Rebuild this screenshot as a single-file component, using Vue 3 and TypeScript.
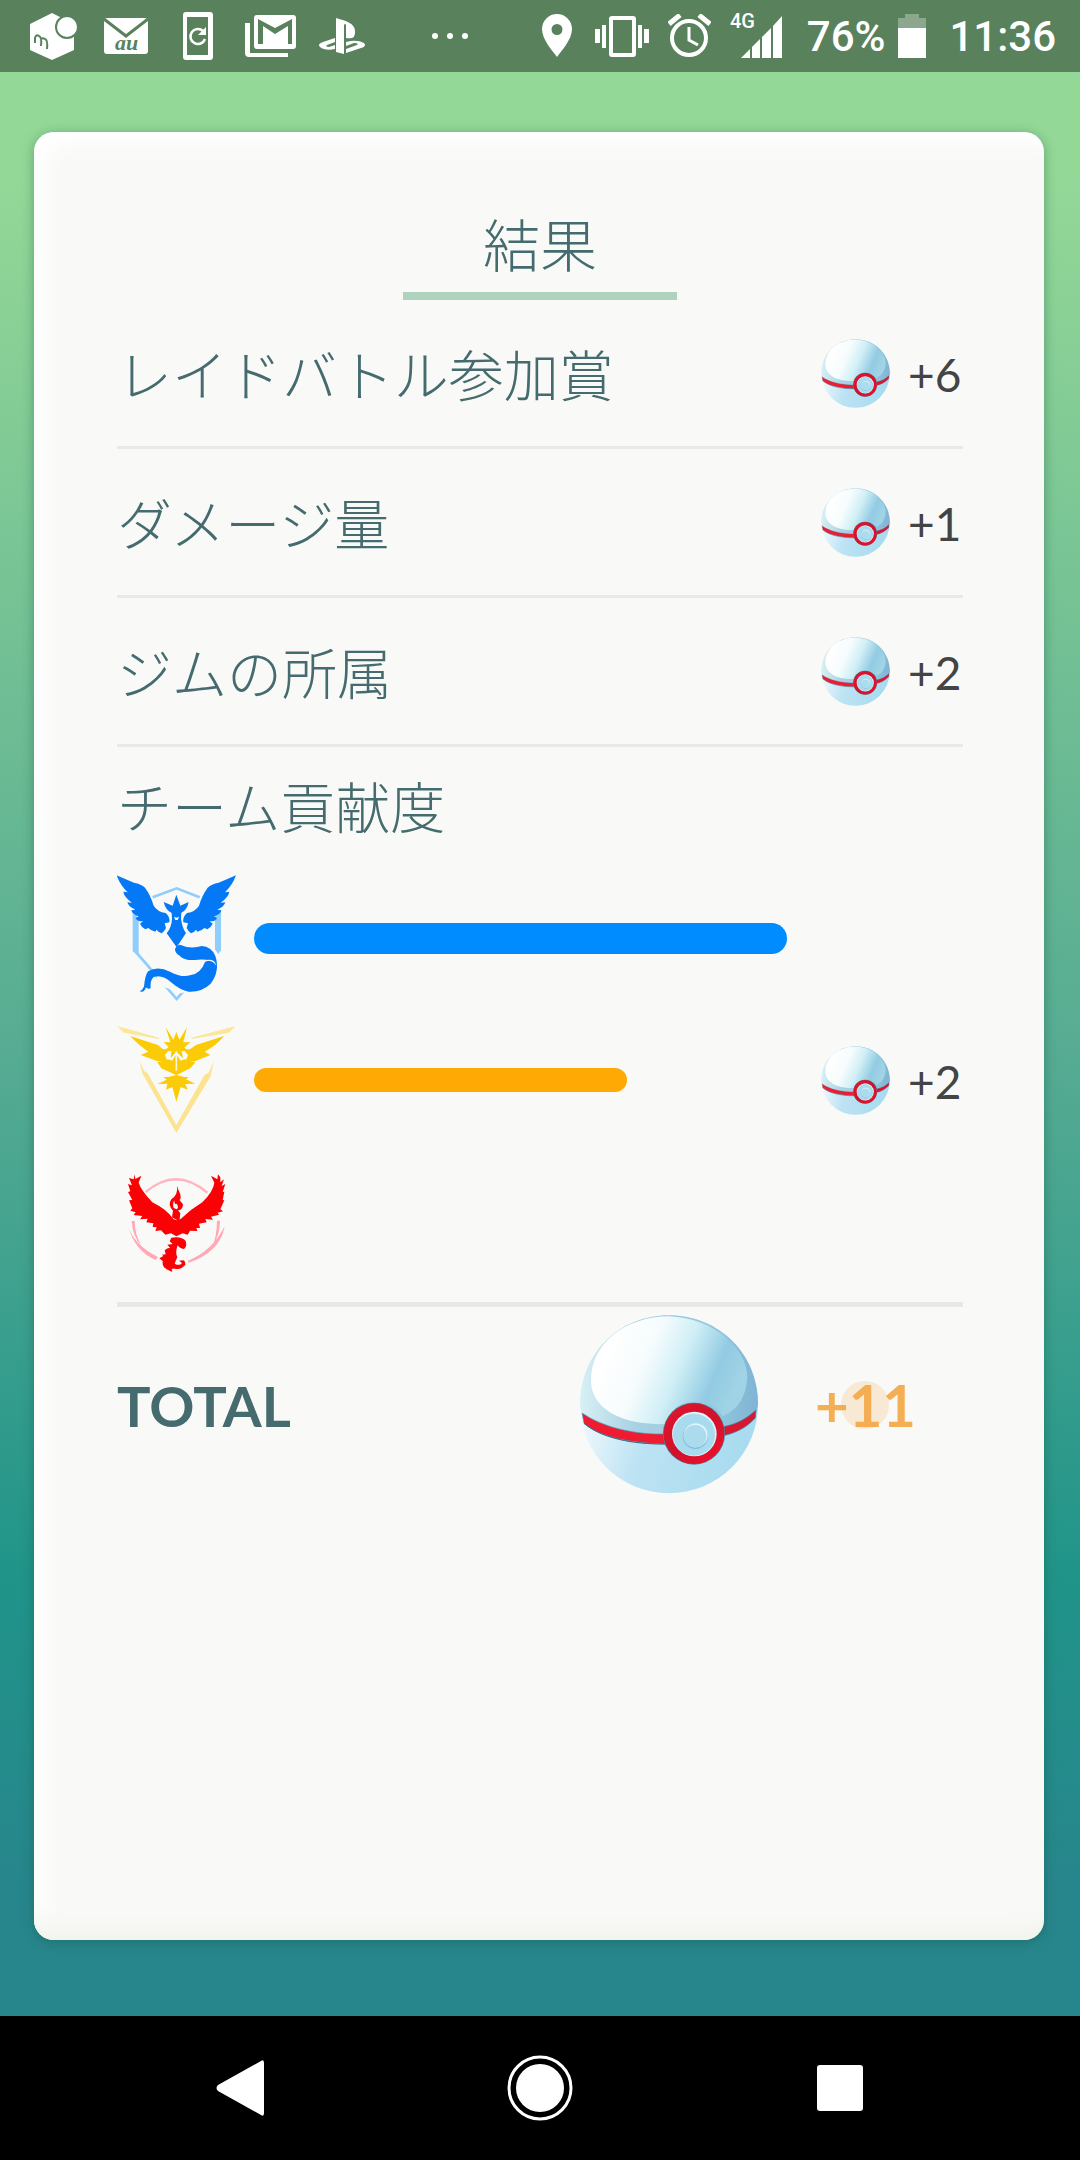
<script setup lang="ts">
interface Reward {
  label: string
  amount: number
}

interface Team {
  id: 'mystic' | 'instinct' | 'valor'
  name: string
  share: number
  amount: number
}

const rewards: Reward[] = [
  { label: 'レイドバトル参加賞', amount: 6 },
  { label: 'ダメージ量', amount: 1 },
  { label: 'ジムの所属', amount: 2 },
]

const teams: Team[] = [
  { id: 'mystic', name: 'ミスティック', share: 100, amount: 0 },
  { id: 'instinct', name: 'インスティンクト', share: 70, amount: 2 },
  { id: 'valor', name: 'ヴァーラー', share: 0, amount: 0 },
]

const total =
  rewards.reduce((sum, r) => sum + r.amount, 0) +
  teams.reduce((sum, t) => sum + t.amount, 0)
</script>

<template>
  <div class="screen">
    <svg class="sprite" aria-hidden="true">
      <defs>
        <linearGradient id="ball-base" x1="0" y1="0.6" x2="1" y2="0.9">
          <stop offset="0" stop-color="#f2f9fd" />
          <stop offset="0.35" stop-color="#bde3f4" />
          <stop offset="1" stop-color="#a4daee" />
        </linearGradient>
        <linearGradient id="ball-shade" x1="0" y1="0.5" x2="1" y2="0.5">
          <stop offset="0" stop-color="#d8f1f5" />
          <stop offset="0.3" stop-color="#a9d2e3" />
          <stop offset="0.75" stop-color="#93c8de" />
          <stop offset="1" stop-color="#7fb4d4" />
        </linearGradient>
        <linearGradient id="ball-shine" x1="0.08" y1="0.35" x2="0.95" y2="0.6">
          <stop offset="0" stop-color="#ffffff" />
          <stop offset="0.3" stop-color="#f6fcfd" />
          <stop offset="0.55" stop-color="#d0eff6" />
          <stop offset="0.82" stop-color="#92cbe3" />
          <stop offset="1" stop-color="#a0d3e5" />
        </linearGradient>
        <linearGradient id="ball-ring" x1="0" y1="0" x2="1" y2="1">
          <stop offset="0" stop-color="#e2162d" />
          <stop offset="0.5" stop-color="#d0122b" />
          <stop offset="1" stop-color="#f30f2c" />
        </linearGradient>
      </defs>
      <symbol id="premier-ball" viewBox="60 75 534 537">
        <circle cx="327" cy="343" r="267" fill="url(#ball-base)" />
        <path d="M60 343C60 190 178 76 327 76S594 190 594 343L590 362C555 395 525 405 490 411L312 434C225 433 130 415 66 374Z" fill="url(#ball-shade)" />
        <path d="M93 265C97 160 195 80 327 79C462 84 562 175 562 262C558 325 530 362 488 378C470 345 435 335 400 335C355 337 328 365 318 402C170 408 88 345 93 265Z" fill="url(#ball-shine)" />
        <path d="M66 369C130 413 225 434 315 432V462C220 460 125 445 72 400Z" fill="#ef1b30" stroke="#36a5c0" stroke-width="2" />
        <path d="M486 411C530 403 560 386 588 360L586 384C558 414 525 430 486 438Z" fill="#d81730" stroke="#2389a8" stroke-width="2" />
        <path d="M72 400C125 445 220 463 315 462" fill="none" stroke="#33647c" stroke-width="3" />
        <circle cx="402" cy="431" r="93" fill="#42849c" />
        <circle cx="402" cy="431" r="91" fill="url(#ball-ring)" />
        <circle cx="403" cy="432" r="67" fill="#daf4fa" />
        <circle cx="402" cy="434" r="63" fill="#a9dbef" />
        <circle cx="406" cy="439" r="38" fill="#84bdd8" />
        <circle cx="407" cy="436" r="36" fill="#dff5fb" />
        <circle cx="405" cy="439" r="34" fill="#abdcee" />
      </symbol>
    </svg>

    <header class="status">
      <div class="notices">
        <span class="slot">
          <svg width="48" height="48" viewBox="0 0 48 48" aria-hidden="true">
            <path d="M22 1 44 12V38L22 48 0 38V12Z" fill="#fff" />
            <circle cx="37" cy="15" r="12" fill="#59825c" />
            <circle cx="37" cy="15" r="10" fill="#fff" />
            <path d="M5 31V26Q6 22 9 24Q12 25 11 34M11 28Q12 25 15 27Q18 28 17 37" fill="none" stroke="#59825c" stroke-width="2" />
          </svg>
        </span>
        <span class="slot">
          <svg width="44" height="36" viewBox="0 0 44 36" aria-hidden="true">
            <rect width="44" height="36" rx="3" fill="#fff" />
            <path d="M0 1 22 18 44 1" fill="none" stroke="#59825c" stroke-width="3" />
            <text x="11" y="32" class="carrier">au</text>
          </svg>
        </span>
        <span class="slot">
          <svg width="30" height="48" viewBox="0 0 30 48" aria-hidden="true">
            <path fill-rule="evenodd" d="M3 0H27Q30 0 30 3V45Q30 48 27 48H3Q0 48 0 45V3Q0 0 3 0ZM4 5V43H25V5Z" fill="#fff" />
            <path d="M20 19A7.500 7.500 0 1 0 22 27" fill="none" stroke="#fff" stroke-width="2.500" />
            <path d="M23 15V23H15Z" fill="#fff" />
          </svg>
        </span>
        <span class="slot">
          <svg width="51" height="42" viewBox="0 0 51 42" aria-hidden="true">
            <rect x="9" width="42" height="34" rx="3" fill="#fff" />
            <path d="M13 29V4L30 13 47 4V29H43V11L30 19 18 11V29Z" fill="#59825c" />
            <path d="M0 8H5V38H43V42H4Q0 42 0 38Z" fill="#fff" />
          </svg>
        </span>
        <span class="slot">
          <svg width="46" height="36" viewBox="0 0 46 36" aria-hidden="true">
            <path d="M17 0C28 3 36 6 36 13Q37 22 27 20V7Q26 5 25 7V36L17 34Z" fill="#fff" />
            <path fill-rule="evenodd" d="M16 20V24L8 27Q6 29 10 29L16 27V31Q6 33 1 29Q-2 26 4 24Z" fill="#fff" />
            <path fill-rule="evenodd" d="M27 24Q38 21 45 25Q48 28 42 30L27 35V31L38 27Q40 25 35 25L27 28Z" fill="#fff" />
          </svg>
        </span>
        <span class="slot wide">
          <svg width="36" height="6" viewBox="0 0 36 6" aria-hidden="true">
            <circle cx="3" cy="3" r="3" fill="#fff" />
            <circle cx="18" cy="3" r="3" fill="#fff" />
            <circle cx="33" cy="3" r="3" fill="#fff" />
          </svg>
        </span>
      </div>
      <div class="system">
        <div class="indicators">
          <svg width="34" height="44" viewBox="0 0 34 44" aria-hidden="true">
            <path fill-rule="evenodd" d="M15 0A15 15 0 0 1 30 15C30 26 19 37 15 43C11 37 0 26 0 15A15 15 0 0 1 15 0ZM15 10A5.500 5.500 0 1 0 15 21A5.500 5.500 0 1 0 15 10Z" fill="#fff" />
          </svg>
          <svg width="54" height="42" viewBox="0 0 54 42" aria-hidden="true">
            <rect x="16" y="3" width="23" height="37" rx="1" fill="none" stroke="#fff" stroke-width="4" />
            <path d="M0 14H5V28H0ZM7 10H11V33H7ZM43 10H47V33H43ZM49 14H54V28H49Z" fill="#fff" />
          </svg>
          <svg width="43" height="44" viewBox="0 0 43 44" aria-hidden="true">
            <circle cx="21" cy="24" r="17" fill="none" stroke="#fff" stroke-width="4" />
            <path d="M21 13V26L30 31" fill="none" stroke="#fff" stroke-width="3" />
            <path d="M1 10 12 1M31 1 42 10" stroke="#fff" stroke-width="5" />
          </svg>
          <svg width="54" height="60" viewBox="0 -6 54 60" aria-label="4G">
            <text x="0" y="16" class="network">4G</text>
            <path d="M11 46 20 37V46ZM22 35 30 27V46H22ZM32 25 41 16V46H32ZM43 14 52 4V46H43Z" fill="#fff" />
          </svg>
        </div>
        <div class="power">
          <span>76%</span>
          <svg width="28" height="44" viewBox="0 0 28 44" aria-hidden="true">
            <path d="M7 0H21V4H28V14H0V4H7Z" fill="#8ca78e" />
            <path d="M0 14H28V44H0Z" fill="#fff" />
          </svg>
        </div>
        <time>11:36</time>
      </div>
    </header>

    <main class="stage">
      <section class="card">
        <h1>結果</h1>
        <ul class="rewards">
          <li v-for="reward in rewards" :key="reward.label" class="row">
            <span class="label">{{ reward.label }}</span>
            <span class="prize">
              <svg class="ball"><use href="#premier-ball" /></svg>
              <span>+{{ reward.amount }}</span>
            </span>
          </li>
        </ul>

        <h2 class="label">チーム貢献度</h2>
        <ul class="teams">
          <li v-for="team in teams" :key="team.id" class="team">
            <svg v-if="team.id === 'mystic'" class="emblem" viewBox="51 21 360 426" role="img" :aria-label="team.name">
              <path d="M158 112 230 85 299 112M107 163V275L230 417 352 280V153" fill="none" stroke="#8fcdfd" stroke-width="8" />
              <path d="M98 160 116 180V288L98 274ZM345 165 363 150V272L345 288Z" fill="#8fcdfd" />
              <path d="M236 252Q270 256 305 246Q350 258 362 300V345L330 385 240 400 160 368Z" fill="#f9faf8" />
              <g fill="#0579f5">
                <path d="M50 46 102 68Q124 72 135 83Q152 106 161 137Q172 155 197 159Q211 171 208 187L194 190L198 204Q193 215 185 220Q174 216 170 209L166 215Q151 211 145 204L136 208Q123 199 120 191L129 184Q111 185 107 174L116 169Q97 164 94 151L106 149Q86 141 82 127L96 128Q73 112 70 95L83 97Q60 75 50 46Z" />
                <path d="M408 46 356 68Q334 72 323 83Q306 106 297 137Q286 155 261 159Q247 171 250 187L264 190L260 204Q265 215 273 220Q284 216 288 209L292 215Q307 211 313 204L322 208Q335 199 338 191L329 184Q347 185 351 174L342 169Q361 164 364 151L352 149Q372 141 376 127L362 128Q385 112 388 95L375 97Q398 75 408 46Z" />
                <path d="M229 104 241 137 266 126Q261 151 244 158L243 177Q248 207 258 219L230 262L200 220Q214 204 216 178L215 159Q197 151 191 126L218 137Z" />
                <path d="M225 266Q231 255 240 254Q270 268 305 258Q334 259 346 288Q361 333 332 371Q305 397 266 395Q241 390 215 368Q183 341 160 352Q150 362 152 385Q142 389 138 382Q132 401 118 393Q127 393 132 379Q135 347 144 334Q173 316 210 335Q246 354 270 346Q302 342 315 306L329 300Q304 297 285 300Q252 302 239 287Q224 278 225 266Z" />
              </g>
              <path d="M313 303Q343 290 349 318Q341 300 313 303Z" fill="#fff" />
              <path d="M222 170 229 173 237 170 233 180 226 180Z" fill="#fff" />
            </svg>
            <svg v-else-if="team.id === 'instinct'" class="emblem" viewBox="51 -3 360 426" role="img" :aria-label="team.name">
              <path d="M52 49 74 54 177 83 177 87 72 68ZM406 49 384 54 274 83 274 87 387 68Z" fill="#fbe69a" />
              <path d="M118 153 133 184 143 190 229 345 314 194 326 188 342 153 331 200 229 369 127 190Z" fill="#fbe38f" />
              <g fill="#fccb08">
                <path d="M90 78 174 105 188 117 207 119 195 135 202 153 173 154 122 135 145 125Q116 106 90 78Z" />
                <path d="M372 78 288 105 271 117 251 119 264 135 257 153 285 154 331 135 314 125Q350 106 372 78Z" />
                <path d="M197 52 220 89 229 66 238 89 261 52 250 97 272 96 253 113 269 124 245 123 249 145 229 125 212 145 214 123 190 124 206 111 191 96 211 97Z" />
                <path d="M172 157 205 148 216 152 229 133 242 152 253 148 286 157 272 174 229 196 184 175Z" />
                <path d="M205 201 229 195 253 201 267 202 258 208 286 221 256 222 263 239 242 231 229 275 217 231 198 239 202 221 172 222 200 209 190 201Z" />
              </g>
              <path d="M229 124V182" stroke="#fff7d2" stroke-width="5" />
            </svg>
            <svg v-else class="emblem" viewBox="51 3 360 426" role="img" :aria-label="team.name">
              <path d="M137 126Q229 48 322 128" fill="none" stroke="#ffb4bf" stroke-width="7" />
              <path d="M84 228Q102 285 174 321L167 330Q105 304 84 228ZM95 213H104Q104 252 123 285Q99 263 95 213ZM374 229Q360 307 265 339L264 332Q335 305 374 229ZM351 212H360Q360 254 338 287Q350 260 351 212Z" fill="#ffa8b6" />
              <g fill="#fb0004">
                <path d="M104 73 106 87 124 77 116 98Q122 119 157 157Q200 178 220 207L229 211 242 207Q272 178 307 157Q340 124 343 98L333 77 352 88 354 73 361 82 361 97 372 88 365 108 376 102 368 126 373 125 368 150 373 151 361 178 369 184 353 188 357 194 333 200 339 209 316 207 320 217 297 221 300 234 289 234 292 243 270 242 263 254 248 250 229 259 213 250 196 254 183 241 166 243 170 232 158 231 160 220 139 217 143 206 120 208 127 198 101 195 107 187 91 182 97 175 87 151 97 150 84 126 91 124 84 102 96 106 87 84 101 88Z" />
                <path d="M231 107Q234 117 241 133Q244 145 239 151L249 163Q248 181 234 181L241 190 238 214 216 202 219 182Q202 165 214 148Q235 133 231 107ZM223 151Q217 160 221 174L230 178Q238 172 230 161Q223 165 223 151Z" fill-rule="evenodd" />
                <path fill-rule="evenodd" d="M209 274 214 263Q245 258 257 273Q262 290 252 297Q238 295 233 286Q225 308 232 321Q226 335 224 341Q240 349 246 339L237 332 250 331Q256 333 256 344Q243 360 225 356L215 356 217 365Q191 358 188 343L188 333L178 325 190 318 186 314 197 313 194 301Q201 293 210 293L202 284 218 282Z" />
              </g>
            </svg>
            <div class="track">
              <div v-if="team.share > 0" class="bar" :class="team.id" :style="{ width: team.share + '%' }"></div>
            </div>
            <span class="prize">
              <template v-if="team.amount > 0">
                <svg class="ball"><use href="#premier-ball" /></svg>
                <span>+{{ team.amount }}</span>
              </template>
            </span>
          </li>
        </ul>

        <div class="total">
          <span class="total-label">TOTAL</span>
          <svg class="big-ball"><use href="#premier-ball" /></svg>
          <strong>+{{ total }}<span class="touch"></span></strong>
        </div>
      </section>
    </main>

    <nav class="nav">
      <button type="button" aria-label="戻る">
        <svg width="48" height="56" viewBox="0 0 48 56"><path d="M45 1Q48 -1 48 3V53Q48 57 45 55L2 31Q-1 28 2 25Z" fill="#fff" /></svg>
      </button>
      <button type="button" aria-label="ホーム">
        <svg width="66" height="66" viewBox="0 0 66 66"><circle cx="33" cy="33" r="31" fill="none" stroke="#fff" stroke-width="3" /><circle cx="33" cy="33" r="24" fill="#fff" /></svg>
      </button>
      <button type="button" aria-label="履歴">
        <svg width="46" height="46" viewBox="0 0 46 46"><rect width="46" height="46" rx="3" fill="#fff" /></svg>
      </button>
    </nav>
  </div>
</template>

<style>
body {
  margin: 0;
}
</style>

<style scoped>
.screen {
  display: flex;
  flex-direction: column;
  min-height: 100vh;
  background: linear-gradient(#94d897 0, #94d897 8%, #54aa92 50%, #209489 73%, #27868c 87%, #27868c 100%);
  font-family: Lato, "Noto Sans CJK JP", sans-serif;
}
.sprite {
  position: absolute;
  width: 0;
  height: 0;
}
svg {
  display: block;
  flex: none;
}
ul {
  margin: 0;
  padding: 0;
  list-style: none;
}

.status {
  display: flex;
  justify-content: space-between;
  align-items: center;
  height: 72px;
  padding: 0 24px 0 18px;
  background: #59825c;
  color: #fff;
  font: 500 42px/72px Roboto, sans-serif;
}
.notices,
.indicators,
.power,
.system {
  display: flex;
  align-items: center;
}
.slot {
  display: flex;
  justify-content: center;
  width: 72px;
}
.slot.wide {
  width: 144px;
}
.system {
  gap: 23px;
}
.indicators {
  gap: 19px;
}
.power {
  gap: 13px;
}
time {
  padding-top: 2px;
}
.power span {
  padding-top: 2px;
}
.network {
  font: 500 20px Roboto, sans-serif;
  fill: #fff;
}
.carrier {
  font: italic bold 22px "Liberation Serif", serif;
  fill: #59825c;
}

.stage {
  display: flex;
  flex: 1;
  padding: 60px 36px 76px 34px;
}
.card {
  flex: 1;
  min-width: 0;
  padding: 72px 81px 0 83px;
  border-radius: 20px;
  background: #f9faf8;
  box-shadow:
    0 2px 12px rgba(20, 80, 60, 0.4),
    inset 0 -24px 24px -16px #f0f2eb,
    inset 16px 16px 24px -8px #fff;
  box-sizing: border-box;
}
h1 {
  width: 274px;
  margin: 0 auto;
  padding-bottom: 5px;
  border-bottom: 8px solid #afd2bf;
  color: #456b6e;
  font-size: 57px;
  font-weight: 300;
  line-height: 83px;
  text-align: center;
}
.row {
  display: flex;
  justify-content: space-between;
  align-items: center;
  height: 146px;
  border-bottom: 3px solid #e9eae8;
}
.label {
  margin: 0;
  color: #456b6e;
  font-size: 55px;
  font-weight: 300;
  line-height: 80px;
}
.row .label {
  padding-top: 4px;
}
h2.label {
  padding: 20px 0;
}
.prize {
  display: flex;
  align-items: center;
  gap: 18px;
  width: 142px;
  color: #444;
  font-size: 46px;
}
.prize span {
  padding-top: 2px;
}
.ball {
  width: 69px;
  height: 69px;
}
.team {
  display: grid;
  grid-template-columns: 120px 1fr 142px;
  align-items: center;
  column-gap: 17px;
  height: 142px;
}
.emblem {
  width: 120px;
  height: 142px;
}
.track {
  margin-right: 17px;
}
.bar {
  height: 24px;
  border-radius: 16px;
}
.bar.mystic {
  height: 31px;
  background: #008cff;
}
.bar.instinct {
  background: #ffaa04;
}
.total {
  display: grid;
  grid-template-columns: 1fr 178px 148px;
  align-items: center;
  column-gap: 57px;
  margin-top: 9px;
  padding-top: 8px;
  border-top: 5px solid #e8e9e7;
}
.total-label {
  padding-top: 2px;
  color: #456b6e;
  font-size: 56px;
  font-weight: 700;
}
.big-ball {
  width: 178px;
  height: 179px;
}
strong {
  position: relative;
  justify-self: start;
  color: #f4af54;
  font-size: 58px;
}
.touch {
  position: absolute;
  top: 50%;
  left: 50%;
  width: 48px;
  height: 48px;
  border-radius: 50%;
  background: rgba(245, 165, 75, 0.2);
  transform: translate(-50%, -50%);
}

.nav {
  display: flex;
  height: 144px;
  padding: 0 90px;
  background: #000;
}
.nav button {
  display: flex;
  flex: 1;
  justify-content: center;
  align-items: center;
  padding: 0;
  border: 0;
  background: none;
}
</style>
